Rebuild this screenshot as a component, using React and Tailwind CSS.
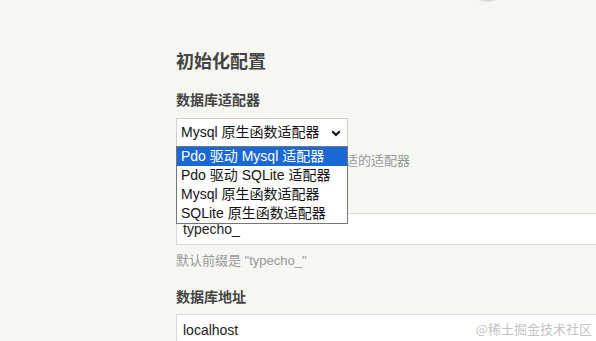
const options = [
  'Pdo 驱动 Mysql 适配器',
  'Pdo 驱动 SQLite 适配器',
  'Mysql 原生函数适配器',
  'SQLite 原生函数适配器',
];

function FakeSelect() {
  return (
    <div className="relative mt-[8px] w-[172px]">
      <div className="flex h-[29px] items-center justify-between border border-[#d0d0cc] bg-white pl-[4px] pr-[6px] text-[14px] text-[#111]">
        <span>Mysql 原生函数适配器</span>
        <svg width="10" height="7" viewBox="0 0 10 7" className="mt-[1px]">
          <path d="M1.2 1.2 L5 5 L8.8 1.2" fill="none" stroke="#111" strokeWidth="2" />
        </svg>
      </div>
      <ul className="absolute left-0 top-[28px] z-10 w-[172px] border border-[#767676] bg-white text-[14px] text-[#111]">
        {options.map((opt, i) => (
          <li
            key={opt}
            className={`h-[19px] pl-[4px] leading-[19px] ${i === 0 ? 'bg-[#1a68d6] text-white' : ''}`}
          >
            {opt}
          </li>
        ))}
      </ul>
    </div>
  );
}

export default function App() {
  return (
    <div
      className="relative h-[341px] w-[596px] overflow-hidden bg-[#f6f6f3] pl-[176px] text-[#444]"
      style={{ fontFamily: '"Liberation Sans", "Noto Sans CJK SC", sans-serif' }}
    >
      {/* bottom of the logo circle peeking at the top */}
      <div className="absolute left-[470px] top-[-36px] h-[38px] w-[34px] rounded-full bg-[#dcdcd9]" />

      <div className="pt-[50px]">
        <h3 className="text-[18px] font-bold leading-[24px]">初始化配置</h3>

        <div className="mt-[16px] text-[14px] font-bold leading-[20px]">数据库适配器</div>
        <FakeSelect />
        <p className="mt-[4px] text-[13px] leading-[20px] text-[#999]">请根据您的数据库类型选择合适的适配器</p>

        <div className="mt-[14px] text-[14px] font-bold leading-[20px]">数据库前缀</div>
        <div className="mt-[8px] flex h-[32px] w-[440px] items-center border border-[#d9d9d6] bg-white pl-[6px] text-[14px] text-[#222]">
          typecho_
        </div>
        <p className="mt-[6px] text-[13px] leading-[20px] text-[#999]">默认前缀是 "typecho_"</p>

        <div className="mt-[16px] text-[14px] font-bold leading-[20px]">数据库地址</div>
        <div className="mt-[7px] flex h-[32px] w-[440px] items-center border border-[#d9d9d6] bg-white pl-[6px] text-[14px] text-[#222]">
          localhost
        </div>
      </div>

      <div
        className="absolute bottom-[3px] right-[4px] text-[13px] leading-[18px] text-[#c4c4c4]"
        style={{ fontFamily: '"Noto Sans CJK SC", sans-serif' }}
      >
        @稀土掘金技术社区
      </div>
    </div>
  );
}
